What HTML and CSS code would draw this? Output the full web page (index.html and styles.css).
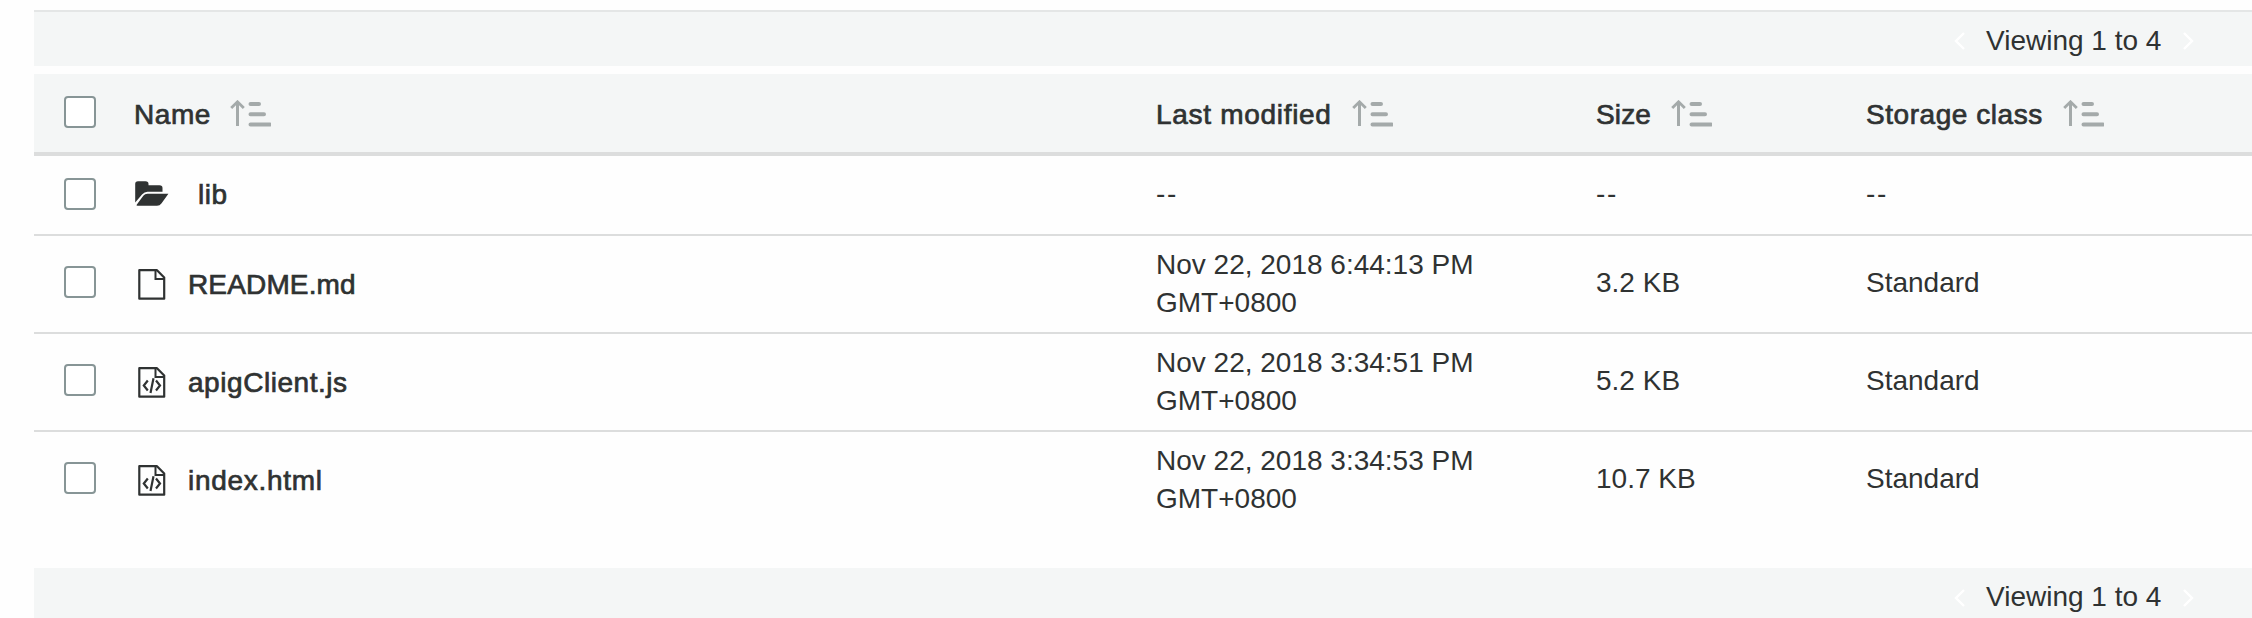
FILE: index.html
```html
<!DOCTYPE html>
<html lang="en">
<head>
<meta charset="utf-8">
<title>Objects</title>
<link rel="stylesheet" href="styles.css">
</head>
<body>
<svg class="defs" aria-hidden="true">
  <symbol id="sort" viewBox="0 0 42 28">
    <path d="M8.5 26V3" fill="none" stroke="#a4aaaa" stroke-width="3"/>
    <path d="M2.2 8L8.5 1.8L14.8 8" fill="none" stroke="#a4aaaa" stroke-width="2.8"/>
    <path d="M21.500 4H30M21.500 14.200H35M21.500 24.500H41" fill="none" stroke="#a4aaaa" stroke-width="4" stroke-linecap="round"/>
  </symbol>
  <symbol id="folder" viewBox="0 0 34 26">
    <path d="M.2 21.5V3Q.2.2 3 .2H10.500Q13.500.2 13.500 3V4.200H24.500Q27.500 4.200 27.500 7V10.800H12.500Q9.500 10.800 7 13.500Z" fill="#2f3232"/>
    <path d="M1.500 24L8.300 14.700Q9.800 12.800 12.500 12.800H33.400L26.600 22.200Q24.800 24.700 22 24.700H2.500Q1.300 24.700 1.500 24Z" fill="#2f3232"/>
  </symbol>
  <symbol id="file" viewBox="0 0 28 31">
    <path d="M1.300 1.200H19L26.200 8.500V29.700H1.300Z" fill="none" stroke="#2f3232" stroke-width="2.200" stroke-linejoin="round"/>
    <path d="M17.500 1.200V10H26.200" fill="none" stroke="#2f3232" stroke-width="2"/>
  </symbol>
  <symbol id="code" viewBox="0 0 28 31">
    <use href="#file"/>
    <path d="M9.800 13.500L5.800 18.500L9.800 23.500M18 13.500L22 18.500L18 23.500M15.500 11.200L12.500 26" fill="none" stroke="#2f3232" stroke-width="2.200"/>
  </symbol>
  <symbol id="prev" viewBox="0 0 12 18">
    <path d="M10 1L2 9L10 17" fill="none" stroke="#fff" stroke-width="2.400"/>
  </symbol>
</svg>
<main class="panel">
  <nav class="pager pager-top">
    <svg class="chevron"><use href="#prev"/></svg>
    <span class="range">Viewing 1 to 4</span>
    <svg class="chevron next"><use href="#prev"/></svg>
  </nav>
  <section class="table">
    <div class="row head">
      <span class="check"></span>
      <div class="name">Name<svg class="sort"><use href="#sort"/></svg></div>
      <div class="strong wide">Last modified<svg class="sort"><use href="#sort"/></svg></div>
      <div class="strong tight">Size<svg class="sort"><use href="#sort"/></svg></div>
      <div class="strong">Storage class<svg class="sort"><use href="#sort"/></svg></div>
    </div>
    <div class="row folder-row">
      <span class="check"></span>
      <div class="name"><svg class="folder"><use href="#folder"/></svg>lib</div>
      <div class="empty">--</div>
      <div class="empty">--</div>
      <div class="empty">--</div>
    </div>
    <div class="row file-row">
      <span class="check"></span>
      <div class="name tight"><svg class="file"><use href="#file"/></svg>README.md</div>
      <div class="date">Nov 22, 2018 6:44:13 PM<br>GMT+0800</div>
      <div class="value">3.2 KB</div>
      <div class="value">Standard</div>
    </div>
    <div class="row file-row">
      <span class="check"></span>
      <div class="name"><svg class="file"><use href="#code"/></svg>apigClient.js</div>
      <div class="date">Nov 22, 2018 3:34:51 PM<br>GMT+0800</div>
      <div class="value">5.2 KB</div>
      <div class="value">Standard</div>
    </div>
    <div class="row file-row">
      <span class="check"></span>
      <div class="name wide"><svg class="file"><use href="#code"/></svg>index.html</div>
      <div class="date">Nov 22, 2018 3:34:53 PM<br>GMT+0800</div>
      <div class="value">10.7 KB</div>
      <div class="value">Standard</div>
    </div>
  </section>
  <nav class="pager pager-bottom">
    <svg class="chevron"><use href="#prev"/></svg>
    <span class="range">Viewing 1 to 4</span>
    <svg class="chevron next"><use href="#prev"/></svg>
  </nav>
</main>
</body>
</html>
```
FILE: styles.css
```css
* {
  box-sizing: border-box;
}

body {
  margin: 0;
  height: 618px;
  overflow: hidden;
  background: #fefefe;
  color: #2f3232;
  font: 28px/38px "Liberation Sans", Arial, sans-serif;
}

.defs {
  display: none;
}

.panel {
  display: flex;
  flex-direction: column;
  height: 618px;
  padding: 10px 0 0 34px;
}

.pager {
  display: flex;
  align-items: center;
  justify-content: flex-end;
  padding-right: 58px;
  background: #f4f6f6;
}

.pager-top {
  height: 56px;
  margin-bottom: 8px;
  padding-top: 3px;
  border-top: 2px solid #e4e6e6;
}

.pager-top .chevron {
  margin-top: 0;
}

.pager-bottom {
  height: 50px;
  margin-top: auto;
  padding-top: 7px;
}

.range {
  width: 176px;
  margin: 0 20px;
  white-space: nowrap;
}

.chevron {
  width: 12px;
  height: 18px;
  margin-top: 2px;
}

.next {
  transform: scaleX(-1);
}

.row {
  display: grid;
  grid-template-columns: 70px 1022px 440px 270px 1fr;
  align-items: center;
  padding-left: 30px;
  border-bottom: 2px solid #dcdddd;
}

.head {
  height: 82px;
  border-bottom-width: 4px;
  background: #f4f6f6;
}

.folder-row {
  height: 80px;
}

.file-row {
  height: 98px;
}

.row:last-child {
  border-bottom-color: transparent;
}

.check {
  width: 32px;
  height: 32px;
  margin-bottom: 2px;
  border: 2px solid #879596;
  border-radius: 4px;
  background: #fff;
}

.file-row .check {
  margin-bottom: 4px;
}

.name,
.strong {
  display: flex;
  align-items: center;
  letter-spacing: 0.55px;
  -webkit-text-stroke: 0.7px #2f3232;
}

.wide {
  letter-spacing: 0.7px;
}

.tight {
  letter-spacing: 0.15px;
}

.head .name,
.head .strong {
  padding-top: 3px;
}

.sort {
  width: 42px;
  height: 28px;
  margin-left: 19px;
  margin-bottom: 2px;
}

.head .name .sort {
  margin-left: 18px;
}

.folder {
  width: 34px;
  height: 26px;
  margin: 0 29px 2px 1px;
}

.file {
  width: 28px;
  height: 31px;
  margin: 0 22px 1px 4px;
}

.file-row .name {
  padding-top: 1px;
}

.empty {
  padding-bottom: 2px;
  letter-spacing: 1.6px;
}

.value {
  padding-bottom: 3px;
}
```
